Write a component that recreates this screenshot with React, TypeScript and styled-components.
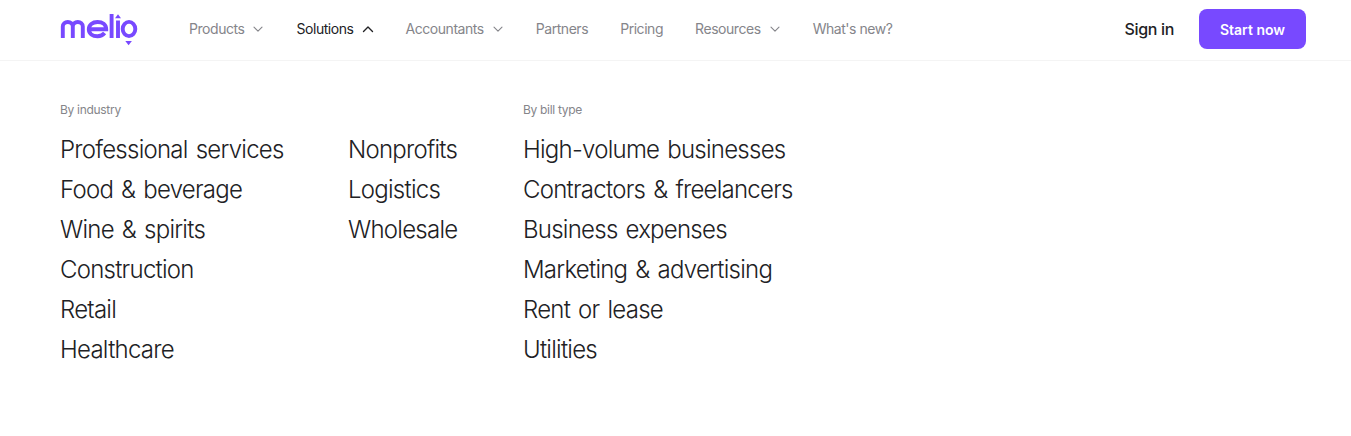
import React from 'react';
import styled, { createGlobalStyle } from 'styled-components';

const GlobalStyle = createGlobalStyle`
  html, body {
    margin: 0;
    padding: 0;
    background: #fff;
    font-family: Inter, "Liberation Sans", sans-serif;
  }
`;

const Page = styled.div`
  width: 1351px;
  height: 436px;
  overflow: hidden;
  background: #fff;
`;

const Header = styled.header`
  display: flex;
  align-items: center;
  height: 58px;
  padding: 0 45px 2px 60px;
  border-bottom: 1px solid #f4f4f4;
`;

const LogoLink = styled.a`
  display: block;
  width: 78px;
  height: 32px;
  margin-right: 51px;
  margin-top: 2px;
`;

const Nav = styled.nav`
  display: flex;
  align-items: center;
  gap: 32px;
  flex: 1;
`;

const NavItem = styled.a<{ $active?: boolean }>`
  display: flex;
  align-items: center;
  gap: 8px;
  font-size: 14px;
  line-height: 20px;
  letter-spacing: -0.45px;
  color: ${props => (props.$active ? '#212124' : '#85858a')};
  svg {
    width: 12px;
    height: 12px;
  }
`;

const Actions = styled.div`
  display: flex;
  align-items: center;
  gap: 25px;
`;

const SignIn = styled.a`
  font-size: 16px;
  font-weight: 500;
  letter-spacing: -0.35px;
  color: #212124;
`;

const StartButton = styled.button`
  width: 107px;
  height: 40px;
  border: none;
  border-radius: 8px;
  background: #7849ff;
  color: #fff;
  font-family: inherit;
  font-size: 14px;
  font-weight: 600;
  letter-spacing: 0;
`;

const Menu = styled.div`
  display: flex;
  padding: 41px 0 0 60px;
`;

const Group = styled.section<{ $width: number }>`
  width: ${props => props.$width}px;
`;

const GroupTitle = styled.div`
  font-size: 12px;
  line-height: 16px;
  letter-spacing: -0.3px;
  color: #85858a;
  margin-bottom: 12px;
`;

const Columns = styled.div`
  display: flex;
`;

const List = styled.ul<{ $width: number }>`
  list-style: none;
  margin: 0;
  padding: 0;
  width: ${props => props.$width}px;
`;

const Item = styled.li`
  font-size: 24px;
  font-weight: 350;
  line-height: 40px;
  letter-spacing: -0.75px;
  word-spacing: 2px;
  white-space: nowrap;
  color: #212124;
`;

const Chevron = ({ up }: { up?: boolean }) => (
  <svg viewBox="0 0 12 12" fill="none" stroke="currentColor" strokeWidth={up ? 1.4 : 1.1} strokeLinecap="round" strokeLinejoin="round">
    <path d={up ? 'M1.5 8.5L6 4l4.5 4.5' : 'M2 4.2L6 8.2 10 4.2'} />
  </svg>
);

const Logo = () => (
  <svg width="78" height="32" viewBox="0 0 78 32" fill="none" stroke="#7849ff" strokeWidth="3.9">
    <path d="M2.8 24V12.5C2.8 9.6 5 8 7.8 8s5 1.6 5 4.5V24M12.8 12.5C12.8 9.6 15 8 17.8 8s5 1.6 5 4.5V24" />
    <path d="M28.8 15.3H46.2C46.2 10.5 42.5 8 37.5 8S28.8 11 28.8 15.3 32.5 22.2 37.5 22.2C40.5 22.2 43 21 44.6 19" />
    <path d="M51.6 0V24" />
    <path d="M58 6.5V24" />
    <ellipse cx="69" cy="15" rx="6.3" ry="7.1" />
    <path d="M58 0.2L61 4.2H55z" fill="#7849ff" stroke="none" />
    <path d="M65.3 27h6.6L68.6 31.2z" fill="#7849ff" stroke="none" />
  </svg>
);

const industryLeft = ['Professional services', 'Food & beverage', 'Wine & spirits', 'Construction', 'Retail', 'Healthcare'];
const industryRight = ['Nonprofits', 'Logistics', 'Wholesale'];
const billTypes = ['High-volume businesses', 'Contractors & freelancers', 'Business expenses', 'Marketing & advertising', 'Rent or lease', 'Utilities'];

export default function App() {
  return (
    <Page>
      <GlobalStyle />
      <Header>
        <LogoLink><Logo /></LogoLink>
        <Nav>
          <NavItem>Products <Chevron /></NavItem>
          <NavItem $active>Solutions <Chevron up /></NavItem>
          <NavItem>Accountants <Chevron /></NavItem>
          <NavItem>Partners</NavItem>
          <NavItem>Pricing</NavItem>
          <NavItem>Resources <Chevron /></NavItem>
          <NavItem>What's new?</NavItem>
        </Nav>
        <Actions>
          <SignIn>Sign in</SignIn>
          <StartButton>Start now</StartButton>
        </Actions>
      </Header>
      <Menu>
        <Group $width={463}>
          <GroupTitle>By industry</GroupTitle>
          <Columns>
            <List $width={288}>
              {industryLeft.map(name => <Item key={name}>{name}</Item>)}
            </List>
            <List $width={175}>
              {industryRight.map(name => <Item key={name}>{name}</Item>)}
            </List>
          </Columns>
        </Group>
        <Group $width={400}>
          <GroupTitle>By bill type</GroupTitle>
          <List $width={400}>
            {billTypes.map(name => <Item key={name}>{name}</Item>)}
          </List>
        </Group>
      </Menu>
    </Page>
  );
}
